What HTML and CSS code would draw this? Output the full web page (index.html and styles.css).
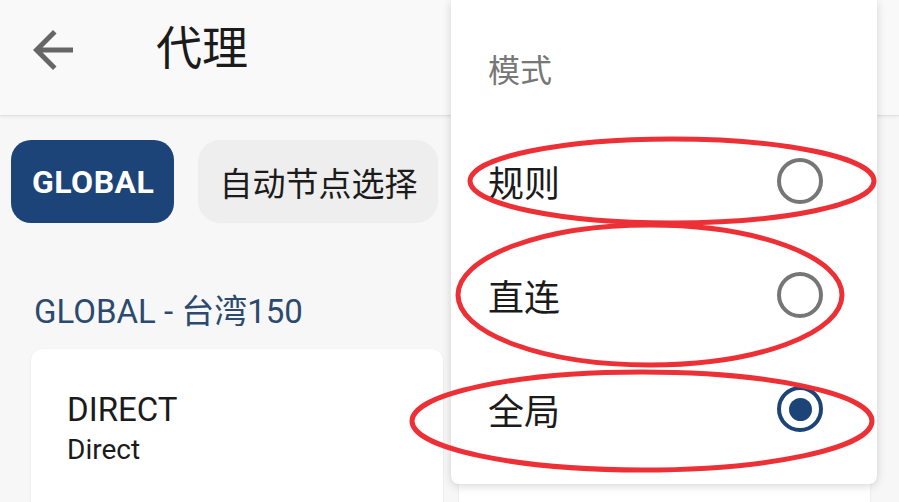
FILE: index.html
```html
<!DOCTYPE html>
<html lang="zh-CN">
<head>
    <meta charset="UTF-8">
    <meta name="viewport" content="width=device-width, initial-scale=1.0">
    <title>代理</title>
    <link rel="stylesheet" href="styles.css">
</head>
<body>
    <header class="appbar">
        <button class="back" aria-label="返回">
            <svg viewBox="0 0 24 24" width="60" height="60">
                <path d="M20 11H7.83l5.59-5.59L12 4l-8 8 8 8 1.41-1.41L7.83 13H20v-2z"/>
            </svg>
        </button>
        <h1 class="title">代理</h1>
    </header>

    <main class="page">
        <div class="chips">
            <span class="chip chip-active">GLOBAL</span>
            <span class="chip">自动节点选择</span>
        </div>

        <h2 class="group-title">GLOBAL - 台湾150</h2>

        <div class="proxy-grid">
            <div class="proxy-card">
                <div class="proxy-name">DIRECT</div>
                <div class="proxy-type">Direct</div>
            </div>
            <div class="proxy-card"></div>
        </div>
    </main>

    <!-- Mode popup menu -->
    <div class="mode-menu">
        <div class="menu-title">模式</div>
        <div class="menu-item">
            <span>规则</span>
            <span class="radio"></span>
        </div>
        <div class="menu-item">
            <span>直连</span>
            <span class="radio"></span>
        </div>
        <div class="menu-item">
            <span>全局</span>
            <span class="radio radio-checked"></span>
        </div>
    </div>

    <!-- Red pen marks drawn over the menu -->
    <svg class="marks" viewBox="0 0 899 502" width="899" height="502">
        <ellipse cx="672" cy="181" rx="202" ry="42"/>
        <ellipse cx="650" cy="295" rx="192" ry="70"/>
        <ellipse cx="642" cy="421" rx="230" ry="49"/>
    </svg>
</body>
</html>
```

FILE: styles.css
```css
/* General Body Styles */
body {
    margin: 0;
    width: 899px;
    height: 502px;
    overflow: hidden;
    position: relative;
    font-family: Roboto, "Noto Sans CJK SC", sans-serif;
    background: #f7f7f7;
    color: #1b1b1b;
}

/* Top App Bar */
.appbar {
    height: 116px;
    box-sizing: border-box;
    display: flex;
    align-items: flex-start;
    padding-top: 20px;
    background: #f9f9f9;
    border-bottom: 1px solid #e2e2e2;
    box-shadow: 0 1px 3px rgba(0, 0, 0, 0.07);
}

.back {
    margin-left: 23px;
    padding: 0;
    border: none;
    background: none;
    width: 60px;
    height: 60px;
}

.back svg {
    fill: #666666;
    display: block;
}

.title {
    margin: 0 0 0 73px;
    font-size: 46px;
    font-weight: 400;
    line-height: 56px;
}

/* Group chips */
.chips {
    display: flex;
    gap: 24px;
    padding: 24px 0 0 11px;
}

.chip {
    height: 83px;
    display: inline-flex;
    align-items: center;
    padding: 0 21px;
    border-radius: 22px;
    background: #eeeeee;
    font-size: 33px;
    box-sizing: border-box;
}

.chip-active {
    padding: 0 20px 0 21px;
    background: #1d4478;
    color: #ffffff;
    font-size: 32px;
    font-weight: 700;
    letter-spacing: 0.5px;
    border-radius: 20px;
}

/* Group title */
.group-title {
    margin: 69px 0 0 34px;
    font-size: 33px;
    font-weight: 400;
    line-height: 40px;
    color: #2b4a6e;
}

/* Proxy cards */
.proxy-grid {
    display: grid;
    grid-template-columns: 1fr 1fr;
    gap: 16px;
    padding: 0 29px 0 31px;
    margin-top: 17px;
}

.proxy-card {
    height: 200px;
    box-sizing: border-box;
    padding: 41px 36px;
    background: #ffffff;
    border-radius: 12px;
    box-shadow: 0 1px 3px rgba(0, 0, 0, 0.08);
}

.proxy-name {
    font-size: 33px;
    line-height: 40px;
}

.proxy-type {
    margin-top: 3px;
    font-size: 28px;
    line-height: 34px;
}

/* Mode popup menu */
.mode-menu {
    position: absolute;
    left: 451px;
    top: 0;
    width: 426px;
    height: 484px;
    box-sizing: border-box;
    padding: 51px 54px 16px 37px;
    background: #ffffff;
    border-radius: 0 0 8px 8px;
    box-shadow: 0 2px 10px rgba(0, 0, 0, 0.16);
}

.menu-title {
    font-size: 32px;
    line-height: 40px;
    color: #777777;
    margin-bottom: 33px;
}

.menu-item {
    height: 114px;
    display: flex;
    align-items: center;
    justify-content: space-between;
    font-size: 36px;
}

.radio {
    width: 46px;
    height: 46px;
    box-sizing: border-box;
    border: 4px solid #767676;
    border-radius: 50%;
    display: flex;
    align-items: center;
    justify-content: center;
}

.radio-checked {
    border-color: #1d4478;
}

.radio-checked::after {
    content: "";
    width: 23px;
    height: 23px;
    border-radius: 50%;
    background: #1d4478;
}

/* Pen marks */
.marks {
    position: absolute;
    left: 0;
    top: 0;
    pointer-events: none;
}

.marks ellipse {
    fill: none;
    stroke: #ec3036;
    stroke-width: 5;
}
```
